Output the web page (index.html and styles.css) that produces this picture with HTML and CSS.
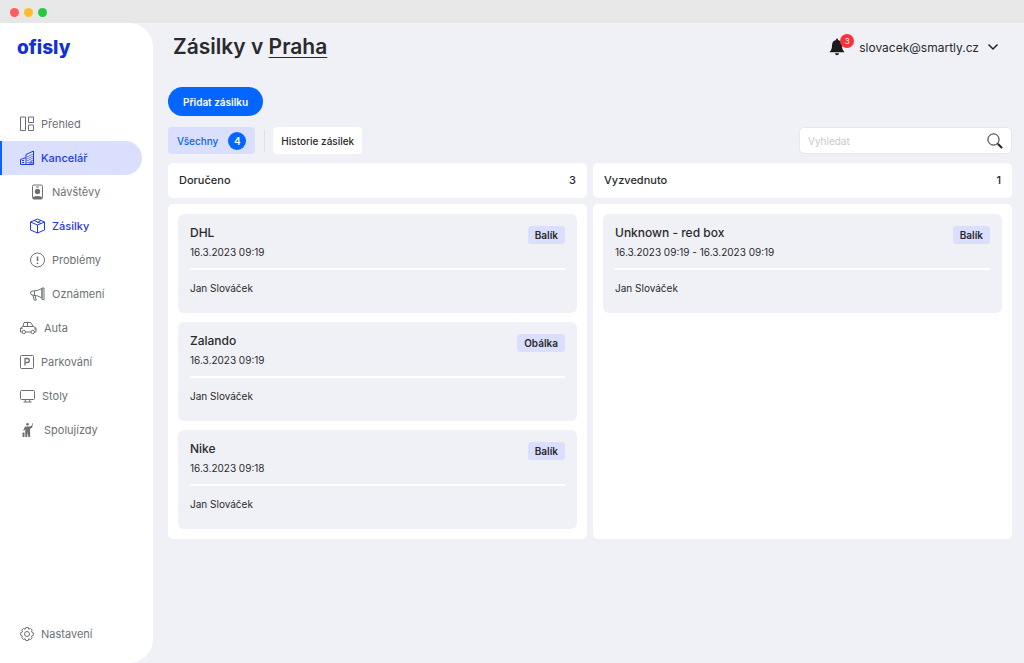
FILE: index.html
```html
<!DOCTYPE html>
<html lang="cs">
<head>
<meta charset="utf-8">
<meta name="viewport" content="width=device-width, initial-scale=1">
<title>Ofisly – Zásilky</title>
<link rel="stylesheet" href="styles.css">
</head>
<body>
<div class="titlebar"><span class="dot dot-red"></span><span class="dot dot-yellow"></span><span class="dot dot-green"></span></div>
<div class="app">
  <aside class="sidebar">
    <a class="logo" href="#">ofisly</a>
    <nav class="nav">
      <a class="nav-item" href="#"><svg class="icon" width="14" height="16" viewBox="0 0 14 16"><path d="M.5 1h5v13.500h-5zM8.500 1h5v5.500h-5zM8.500 9h5v5.500h-5z"/></svg>Přehled</a>
      <a class="nav-item active" href="#"><svg class="icon" width="14" height="16" viewBox="0 0 14 16"><path d="M.5 14.500V9.500L6 7.500M.5 14.500h13V1L6 4.500v10M10 14.500v-2.500h2v2.500M2 10.500h2M2 12.500h2"/><path d="M8 6v8M10 5v6M12 4v7" stroke-dasharray="1 1"/></svg>Kancelář</a>
      <a class="nav-item sub" href="#"><svg class="icon" width="15" height="16" viewBox="0 0 15 16"><rect x="2.500" y="1" width="10" height="14" rx="1.500"/><path d="M6 3h3"/><circle class="solid" cx="7.500" cy="7.500" r="2.700"/><path class="solid" d="M3 15v-2q4.500-2 9 0v2z"/></svg>Návštěvy</a>
      <a class="nav-item sub current" href="#"><svg class="icon" width="15" height="16" viewBox="0 0 15 16"><path d="M.5 4 7.500 1l7 3v8l-7 3-7-3zM.5 4l7 3 7-3M7.500 7v8M4 2.500l7 3M7.500 4.500l3.500-2"/></svg>Zásilky</a>
      <a class="nav-item sub" href="#"><svg class="icon" width="15" height="16" viewBox="0 0 15 16"><circle cx="7.500" cy="8" r="7"/><path d="M7.500 4.500v4.500M7.500 10.500v1.500" stroke-width="1.500"/></svg>Problémy</a>
      <a class="nav-item sub" href="#"><svg class="icon" width="15" height="16" viewBox="0 0 15 16"><path d="M12 2.500Q8 5 2 5.200Q.5 5.300.5 7t1.500 2q6 .3 10 3zM12 2h2v11.500h-2zM4.500 5.200V9M3 9.200l1.200 5h2L5 9.400"/></svg>Oznámení</a>
      <a class="nav-item" href="#"><svg class="icon" width="17" height="16" viewBox="0 0 17 16"><path d="M2 12H.5V8L3 6.500 4 2.500h6.500l3 4 2.500 1.500v4h-1.500M5.500 12h5.500M3 6.500h10.500M7.500 2.500v4M.5 8.500h2M14 9h2"/><circle cx="3.800" cy="12" r="1.700"/><circle cx="12.700" cy="12" r="1.700"/></svg>Auta</a>
      <a class="nav-item" href="#"><svg class="icon" width="14" height="16" viewBox="0 0 14 16"><rect x=".5" y="1.500" width="13" height="13" rx="1"/><path d="M5 11.500v-7h2.300a2 2 0 0 1 0 4H5" stroke-width="1.300"/></svg>Parkování</a>
      <a class="nav-item" href="#"><svg class="icon" width="15" height="16" viewBox="0 0 15 16"><rect x=".5" y="2.500" width="14" height="9" rx="1"/><path d="M5.500 11.500 5 14M9.500 11.500l.5 2.500M3.500 14h8"/></svg>Stoly</a>
      <a class="nav-item" href="#"><svg class="icon" width="17" height="16" viewBox="0 0 17 16"><circle class="solid" cx="7.500" cy="2.300" r="1.300"/><path class="solid" d="M5 4.500h4l2.500-.5 1-3 .5.300-.8 4.200L10 7l.2 8H8.300l-.5-4.500L7 15H5.300V7L4 9l-.7-.7zM3 10.500h1.500V15H2.500v-4z"/></svg>Spolujízdy</a>
    </nav>
    <a class="nav-item settings" href="#"><svg class="icon" width="14" height="16" viewBox="0 0 14 16"><path d="M5.800 1.500h2.400l.6 1.700 1.700-.8 1.700 1.700-.8 1.700 1.900.9v2.600l-1.900.9.800 1.700-1.700 1.700-1.700-.8-.6 1.700H5.800l-.6-1.700-1.700.8-1.700-1.700.8-1.700L.7 9.300V6.700l1.900-.9-.8-1.700 1.700-1.700 1.700.8z"/><circle cx="7" cy="8" r="2.500"/></svg>Nastavení</a>
  </aside>

  <main class="main">
    <header class="header">
      <h1 class="title">Zásilky v <a href="#">Praha</a></h1>
      <div class="account">
        <button class="bell" type="button" aria-label="Oznámení">
          <svg width="16" height="18" viewBox="0 0 16 18"><path d="M8 .5a1 1 0 0 1 1 1v.6q4 1 4 5.400c0 3.500 1 5 2.200 6v.7H.8v-.7C2 12.500 3 11 3 7.500q0-4.400 4-5.400v-.6a1 1 0 0 1 1-1zM6 15.300h4a2 2 0 0 1-4 0z"/></svg>
          <span class="bell-count">3</span>
        </button>
        <button class="user" type="button">slovacek@smartly.cz<svg width="12" height="8" viewBox="0 0 12 8"><path d="m1.500 1.500 4.500 4.500 4.500-4.500"/></svg></button>
      </div>
    </header>

    <button class="add" type="button">Přidat zásilku</button>

    <div class="toolbar">
      <button class="tab tab-active" type="button">Všechny<span class="count">4</span></button>
      <span class="divider"></span>
      <button class="tab" type="button">Historie zásilek</button>
      <form class="search">
        <input type="text" placeholder="Vyhledat" aria-label="Vyhledat">
        <button class="search-button" type="button" aria-label="Hledat"><svg width="16" height="16" viewBox="0 0 16 16"><circle cx="6.500" cy="6.500" r="5.600"/><path d="m10.700 10.700 1 1"/><path class="handle" d="m11.300 11.300 3.200 3.200"/></svg></button>
      </form>
    </div>

    <div class="board">
      <section class="column">
        <h2 class="column-head">Doručeno<span>3</span></h2>
        <div class="column-body">
          <article class="card">
            <div class="card-top"><div><h3>DHL</h3><p>16.3.2023 09:19</p></div><span class="badge">Balík</span></div>
            <p class="person">Jan Slováček</p>
          </article>
          <article class="card">
            <div class="card-top"><div><h3>Zalando</h3><p>16.3.2023 09:19</p></div><span class="badge">Obálka</span></div>
            <p class="person">Jan Slováček</p>
          </article>
          <article class="card">
            <div class="card-top"><div><h3>Nike</h3><p>16.3.2023 09:18</p></div><span class="badge">Balík</span></div>
            <p class="person">Jan Slováček</p>
          </article>
        </div>
      </section>
      <section class="column">
        <h2 class="column-head">Vyzvednuto<span>1</span></h2>
        <div class="column-body">
          <article class="card">
            <div class="card-top"><div><h3>Unknown - red box</h3><p>16.3.2023 09:19 - 16.3.2023 09:19</p></div><span class="badge">Balík</span></div>
            <p class="person">Jan Slováček</p>
          </article>
        </div>
      </section>
    </div>
  </main>
</div>
</body>
</html>
```

FILE: styles.css
```css
* { box-sizing: border-box; }
body {
  margin: 0;
  min-height: 100vh;
  display: flex;
  flex-direction: column;
  background: #f0f1f7;
  color: #2a2a2c;
  font-family: Inter, "Noto Sans", sans-serif;
  font-size: 10px;
}
h1, h2, h3, p { margin: 0; }
a { color: inherit; text-decoration: none; }
button {
  border: 0;
  padding: 0;
  background: none;
  color: inherit;
  font: inherit;
  cursor: pointer;
}
svg { display: block; flex: none; }

.titlebar {
  height: 23px;
  display: flex;
  align-items: center;
  gap: 5px;
  padding: 1px 10px 0;
  background: #e7e7e7;
}
.dot { width: 9px; height: 9px; border-radius: 50%; }
.dot-red { background: #ff5c5c; }
.dot-yellow { background: #ffbd2e; }
.dot-green { background: #28c840; }

.app { flex: 1; display: flex; }

.sidebar {
  width: 153px;
  flex: none;
  display: flex;
  flex-direction: column;
  padding: 11px 0 12px;
  background: #fff;
  border-radius: 0 24px 24px 0;
}
.logo {
  padding-left: 17px;
  color: #1230d6;
  font-size: 19px;
  font-weight: 800;
  line-height: 28px;
}
.nav { margin-top: 45px; }
.nav-item {
  height: 34px;
  display: flex;
  align-items: center;
  gap: 7px;
  margin-right: 11px;
  padding-left: 20px;
  color: #6c7074;
  font-size: 11px;
}
.nav-item.sub { padding-left: 30px; }
.nav-item.active {
  padding-left: 18px;
  border-left: 2px solid #0a62ff;
  border-radius: 0 17px 17px 0;
  background: #dadffd;
  color: #1f3be0;
  font-weight: 500;
}
.nav-item.current { color: #1f3be0; font-weight: 500; }
.nav-item.settings { margin-top: auto; }
.icon { fill: none; stroke: currentColor; stroke-width: 1; stroke-linejoin: round; }
.icon .solid { fill: currentColor; stroke: none; }

.main { flex: 1; min-width: 0; padding: 9px 12px 24px 15px; }
.header {
  display: flex;
  align-items: center;
  justify-content: space-between;
  padding: 0 13px 0 5px;
}
.title { font-size: 21px; font-weight: 600; line-height: 30px; }
.title a {
  text-decoration: underline;
  text-decoration-thickness: 1px;
  text-underline-offset: 3px;
}
.account { display: flex; align-items: center; gap: 14px; }
.bell { position: relative; fill: #1c1c1c; }
.bell-count {
  position: absolute;
  top: -4px;
  right: -9px;
  width: 14px;
  border-radius: 50%;
  background: #fb3038;
  color: #fff;
  font-size: 8px;
  line-height: 14px;
}
.user { display: flex; align-items: center; gap: 8px; font-size: 12px; }
.user svg { fill: none; stroke: #222; stroke-width: 1.5; }

.add {
  height: 29px;
  margin-top: 25px;
  padding: 0 15px;
  border-radius: 15px;
  background: #0566ff;
  color: #fff;
  font-weight: 600;
}
.toolbar { display: flex; align-items: center; margin-top: 11px; }
.tab {
  height: 27px;
  display: flex;
  align-items: center;
  gap: 10px;
  padding: 0 8px;
  border-radius: 4px;
  background: #fff;
  font-weight: 500;
}
.tab-active { padding: 0 9px; background: #dadffd; color: #0566ff; }
.count {
  width: 18px;
  border-radius: 50%;
  background: #0566ff;
  color: #fff;
  font-weight: 600;
  line-height: 18px;
}
.divider { width: 1px; height: 22px; margin: 0 8px 0 9px; background: #dadffd; }
.search {
  width: 213px;
  height: 27px;
  display: flex;
  align-items: center;
  margin-left: auto;
  padding: 0 8px;
  border: 1px solid #e4e6f1;
  border-radius: 5px;
  background: #fff;
}
.search input {
  flex: 1;
  min-width: 0;
  padding: 0;
  border: 0;
  outline: 0;
  background: none;
  color: #222;
  font: inherit;
}
.search input::placeholder { color: #c9c9c9; opacity: 1; }
.search-button svg { fill: none; stroke: #222; stroke-width: 1; }
.search-button .handle { stroke-width: 2; stroke-linecap: round; }

.board {
  display: grid;
  grid-template-columns: 1fr 1fr;
  gap: 6px;
  margin-top: 9px;
}
.column { display: flex; flex-direction: column; gap: 6px; }
.column-head {
  display: flex;
  align-items: center;
  justify-content: space-between;
  height: 35px;
  padding: 0 11px 1px;
  border-radius: 5px;
  background: #fff;
  font-size: 11px;
  font-weight: 500;
}
.column-body {
  flex: 1;
  display: flex;
  flex-direction: column;
  gap: 9px;
  padding: 10px;
  border-radius: 5px;
  background: #fff;
}
.card {
  padding: 10px 12px 17px;
  border-radius: 6px;
  background: #f0f1f7;
  line-height: 16px;
}
.card-top {
  display: flex;
  align-items: flex-start;
  justify-content: space-between;
  padding-bottom: 8px;
  border-bottom: 2px solid #fff;
}
.card h3 { margin-bottom: 3px; font-size: 12px; font-weight: 500; line-height: 17px; }
.person { margin-top: 10px; }
.badge {
  margin-top: 2px;
  padding: 1px 7px;
  border-radius: 3px;
  background: #dadffd;
  font-weight: 600;
}
```
